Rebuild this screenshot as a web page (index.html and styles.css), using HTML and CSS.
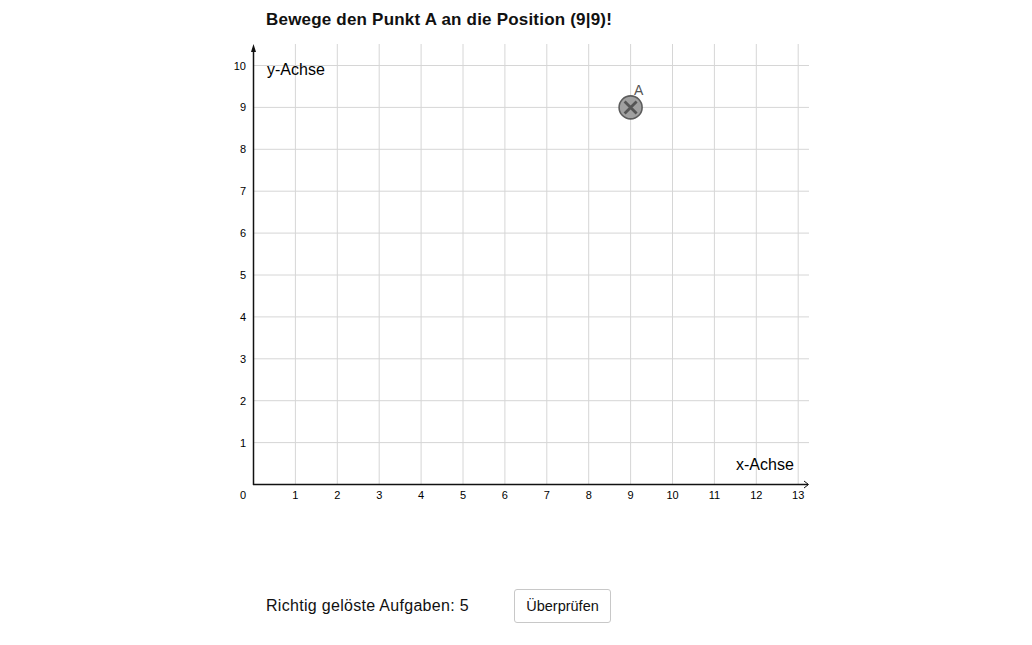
FILE: index.html
```html
<!DOCTYPE html>
<html lang="de">
<head>
<meta charset="utf-8">
<title>Punkt bewegen</title>
<link rel="stylesheet" href="styles.css">
</head>
<body>
<main class="stage">
  <h1 class="title">Bewege den Punkt A an die Position (9|9)!</h1>
  <svg class="graph" width="600" height="470" viewBox="0 0 600 470" xmlns="http://www.w3.org/2000/svg">
    <g class="grid">
      <line x1="75.4" y1="4" x2="75.4" y2="444.5"/>
      <line x1="117.3" y1="4" x2="117.3" y2="444.5"/>
      <line x1="159.2" y1="4" x2="159.2" y2="444.5"/>
      <line x1="201.1" y1="4" x2="201.1" y2="444.5"/>
      <line x1="243" y1="4" x2="243" y2="444.5"/>
      <line x1="284.9" y1="4" x2="284.9" y2="444.5"/>
      <line x1="326.8" y1="4" x2="326.8" y2="444.5"/>
      <line x1="368.7" y1="4" x2="368.7" y2="444.5"/>
      <line x1="410.6" y1="4" x2="410.6" y2="444.5"/>
      <line x1="452.5" y1="4" x2="452.5" y2="444.5"/>
      <line x1="494.4" y1="4" x2="494.4" y2="444.5"/>
      <line x1="536.3" y1="4" x2="536.3" y2="444.5"/>
      <line x1="578.2" y1="4" x2="578.2" y2="444.5"/>
      <line x1="33.5" y1="402.6" x2="589" y2="402.6"/>
      <line x1="33.5" y1="360.7" x2="589" y2="360.7"/>
      <line x1="33.5" y1="318.8" x2="589" y2="318.8"/>
      <line x1="33.5" y1="276.9" x2="589" y2="276.9"/>
      <line x1="33.5" y1="235" x2="589" y2="235"/>
      <line x1="33.5" y1="193.1" x2="589" y2="193.1"/>
      <line x1="33.5" y1="151.2" x2="589" y2="151.2"/>
      <line x1="33.5" y1="109.3" x2="589" y2="109.3"/>
      <line x1="33.5" y1="67.4" x2="589" y2="67.4"/>
      <line x1="33.5" y1="25.5" x2="589" y2="25.5"/>
    </g>
    <g class="axes">
      <line x1="33.5" y1="445" x2="33.5" y2="8"/>
      <polygon points="33.5,4 31,12 36,12"/>
      <line x1="33" y1="444.5" x2="588" y2="444.5"/>
      <polyline class="chev" points="584,441 588.5,444.5 584,448"/>
    </g>
    <g class="ylabels">
      <text x="26" y="406.6">1</text>
      <text x="26" y="364.7">2</text>
      <text x="26" y="322.8">3</text>
      <text x="26" y="280.9">4</text>
      <text x="26" y="239">5</text>
      <text x="26" y="197.1">6</text>
      <text x="26" y="155.2">7</text>
      <text x="26" y="113.3">8</text>
      <text x="26" y="71.4">9</text>
      <text x="26" y="29.5">10</text>
      <text x="26" y="458.5">0</text>
    </g>
    <g class="xlabels">
      <text x="75.4" y="458.5">1</text>
      <text x="117.3" y="458.5">2</text>
      <text x="159.2" y="458.5">3</text>
      <text x="201.1" y="458.5">4</text>
      <text x="243" y="458.5">5</text>
      <text x="284.9" y="458.5">6</text>
      <text x="326.8" y="458.5">7</text>
      <text x="368.7" y="458.5">8</text>
      <text x="410.6" y="458.5">9</text>
      <text x="452.5" y="458.5">10</text>
      <text x="494.4" y="458.5">11</text>
      <text x="536.3" y="458.5">12</text>
      <text x="578.2" y="458.5">13</text>
    </g>
    <text class="axis-name" x="47" y="34.5">y-Achse</text>
    <text class="axis-name" x="516" y="430">x-Achse</text>
    <g class="point">
      <circle cx="410.6" cy="67.4" r="11.5"/>
      <path class="cross" d="M404.6 61.4 L416.6 73.4 M416.6 61.4 L404.6 73.4"/>
    </g>
    <text class="point-label" x="414" y="54.5">A</text>
  </svg>
  <div class="footer">
    <span class="score">Richtig gelöste Aufgaben: 5</span>
    <button class="check" type="button">Überprüfen</button>
  </div>
</main>
</body>
</html>
```
FILE: styles.css
```css
html, body {
  margin: 0;
  padding: 0;
  background: #ffffff;
}

body {
  font-family: "Liberation Sans", Arial, sans-serif;
  color: #000;
}

.stage {
  width: 600px;
  padding-left: 220px;
}

.title {
  margin: 0;
  padding-left: 46px;
  height: 40px;
  line-height: 40px;
  font-size: 17px;
  letter-spacing: 0.2px;
  font-weight: bold;
  color: #111;
}

.graph {
  display: block;
}

.grid line {
  stroke: #d6d6d6;
  stroke-width: 1;
}

.axes line {
  stroke: #111;
  stroke-width: 1.5;
}

.axes polygon {
  fill: #111;
}

.axes .chev {
  fill: none;
  stroke: #111;
  stroke-width: 1;
}

.ylabels text {
  font-family: "Liberation Sans", Arial, sans-serif;
  font-size: 11px;
  text-anchor: end;
  fill: #000;
}

.xlabels text {
  font-family: "Liberation Sans", Arial, sans-serif;
  font-size: 11px;
  text-anchor: middle;
  fill: #000;
}

.axis-name {
  font-family: "Liberation Sans", Arial, sans-serif;
  font-size: 16px;
  fill: #000;
}

.point circle {
  fill: #a0a0a0;
  stroke: #5c5c5c;
  stroke-width: 1.6;
}

.point .cross {
  stroke: #555;
  stroke-width: 2.8;
  fill: none;
}

.point-label {
  font-family: "Liberation Sans", Arial, sans-serif;
  font-size: 14px;
  fill: #555;
}

.footer {
  display: grid;
  grid-template-columns: 248px auto;
  align-items: center;
  margin-top: 79px;
  padding-left: 46px;
  justify-content: start;
}

.score {
  font-size: 16px;
  letter-spacing: 0.3px;
  color: #111;
}

.check {
  font-family: "Liberation Sans", Arial, sans-serif;
  font-size: 14.5px;
  color: #111;
  background: #fff;
  border: 1px solid #c8c8c8;
  border-radius: 3px;
  height: 34px;
  width: 97px;
  padding: 0;
}
```
